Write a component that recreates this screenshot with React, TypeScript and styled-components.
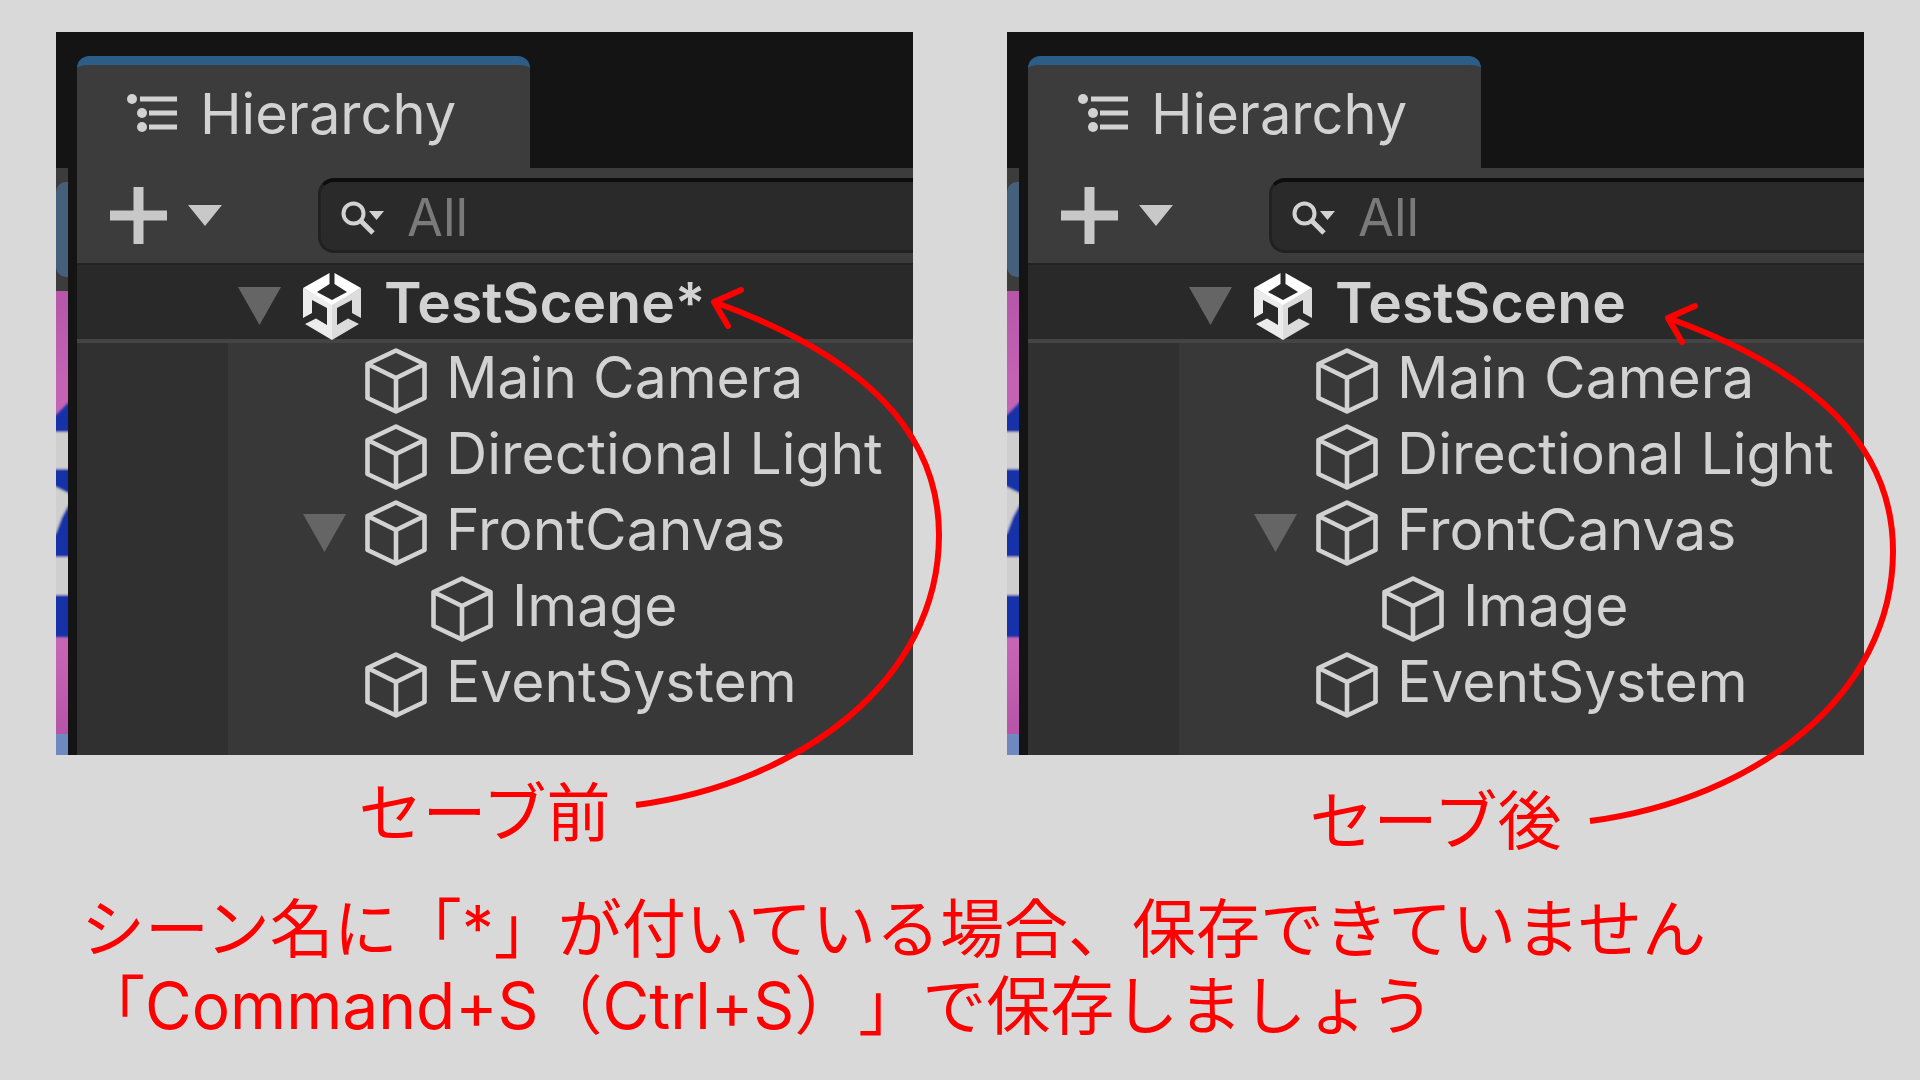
import React from "react";
import styled, { createGlobalStyle } from "styled-components";

const GlobalStyle = createGlobalStyle`
  * { box-sizing: border-box; }
  body { margin: 0; background: #d9d9d9; }
`;

const Page = styled.main`
  min-height: 100vh;
  padding: 32px 56px 0;
  background: #d9d9d9;
  color: #ff0000;
  font-family: Inter, "Noto Sans CJK JP", sans-serif;
`;

const Comparison = styled.div`
  display: grid;
  grid-template-columns: 1fr 1fr;
  column-gap: 94px;
`;

const Figure = styled.figure`
  position: relative;
  margin: 0;
  min-width: 0;
`;

const Caption = styled.figcaption<{ $drop: number }>`
  padding-top: ${(p) => p.$drop}px;
  font-size: 64px;
  line-height: 77px;
  text-align: center;
`;

const Arrow = styled.svg<{ $top: number; $overhang: number }>`
  position: absolute;
  top: ${(p) => p.$top}px;
  right: ${(p) => -p.$overhang}px;
  width: 320px;
  height: 540px;
  overflow: visible;
  pointer-events: none;
`;

const Editor = styled.section`
  display: flex;
  overflow: hidden;
  background: #141414;
  color: #d2d2d2;
`;

const GameStrip = styled.div`
  flex: none;
  display: flex;
  flex-direction: column;
  width: 12px;
  padding-top: 136px;
`;

const StripToolbar = styled.div`
  padding: 14px 0;
  background: #3c3c3c;
`;

const StripTab = styled.div`
  height: 95px;
  border-radius: 10px 0 0 10px;
  background: #46607c;
`;

const StripView = styled.svg`
  display: block;
  width: 12px;
  height: 464px;
`;

const Panel = styled.div`
  flex: 1;
  min-width: 0;
  margin-left: 9px;
  padding-top: 24px;
`;

const Tab = styled.h2`
  display: flex;
  align-items: center;
  gap: 23px;
  width: 453px;
  height: 112px;
  margin: 0;
  padding: 0 0 5px 50px;
  border-top: 9px solid #2c5d87;
  border-radius: 12px 12px 0 0;
  background: #3c3c3c;
  font-size: 56px;
  font-weight: 400;
  line-height: 68px;
`;

const Toolbar = styled.div`
  display: flex;
  align-items: center;
  height: 95px;
  padding-left: 33px;
  background: #3c3c3c;
`;

const AddButton = styled.button`
  display: flex;
  align-items: center;
  gap: 21px;
  margin-right: 96px;
  padding: 0;
  border: 0;
  background: none;
  color: #c8c8c8;
`;

const SearchField = styled.label`
  flex: 1;
  display: flex;
  align-items: center;
  gap: 22px;
  min-width: 0;
  height: 75px;
  padding: 3px 0 0 20px;
  border: solid #212121;
  border-width: 4px 0 3px 3px;
  border-top-color: #0d0d0d;
  border-radius: 16px 0 0 16px;
  background: #2a2a2a;
`;

const SearchInput = styled.input`
  flex: 1;
  min-width: 0;
  padding: 0;
  border: 0;
  outline: 0;
  background: none;
  color: #d2d2d2;
  font: 400 52px/64px Inter, sans-serif;
  &::placeholder { color: #7a7a7a; opacity: 1; }
`;

const SceneRow = styled.div`
  display: flex;
  align-items: center;
  height: 80px;
  padding: 8px 0 0 161px;
  border-top: 2px solid #232323;
  border-bottom: 4px solid #444444;
  background: #292929;
`;

const SceneLogo = styled.svg`
  flex: none;
  width: 58px;
  height: 67px;
  margin: 0 23px 0 22px;
`;

const Tree = styled.ul`
  margin: 0;
  padding: 0 0 32px 75px;
  border-left: 151px solid #303030;
  background: #383838;
  list-style: none;
`;

const TreeItem = styled.li<{ $depth: number }>`
  display: flex;
  align-items: center;
  gap: 19px;
  height: 76px;
  padding-left: ${(p) => p.$depth * 66}px;
`;

const Name = styled.span<{ $bold?: boolean }>`
  padding-bottom: 6px;
  font-size: 57px;
  font-weight: ${(p) => (p.$bold ? 600 : 400)};
  line-height: 68px;
  white-space: nowrap;
`;

const Toggle = styled.span`
  flex: none;
  display: flex;
  width: 43px;
`;

const Glyph = styled.svg`
  flex: none;
  display: block;
`;

const Note = styled.p`
  margin: 0;
  padding: 31px 0 0 25px;
  font-size: 64px;
  line-height: 77px;
  text-spacing-trim: space-all;
`;

const Foldout = () => (
  <Glyph width="43" height="38" viewBox="0 0 43 38" aria-hidden="true">
    <path d="M0 0H43L21.5 38Z" fill="#656565" />
  </Glyph>
);

const Cube = () => (
  <Glyph width="62" height="66" viewBox="0 0 62 66" fill="none" stroke="#d2d2d2" strokeWidth="4.6" strokeLinejoin="round" aria-hidden="true">
    <path d="M31 2.500L59.500 16V50L31 63.500L2.500 50V16ZM2.500 16L31 30L59.500 16M31 30V63" />
  </Glyph>
);

const HierarchyIcon = () => (
  <Glyph width="50" height="40" viewBox="0 0 50 40" fill="#d2d2d2" aria-hidden="true">
    <circle cx="5" cy="5" r="5" />
    <circle cx="15" cy="19" r="5" />
    <circle cx="15" cy="33" r="5" />
    <path d="M13 2.500H50V7.500H13ZM22 16.500H50V21.500H22ZM22 30.500H50V35.500H22Z" />
  </Glyph>
);

const SearchIcon = () => (
  <Glyph width="44" height="34" viewBox="0 0 44 34" aria-hidden="true">
    <circle cx="12.500" cy="12.500" r="10" fill="none" stroke="#d2d2d2" strokeWidth="4" />
    <path d="M20 20L32 32" stroke="#d2d2d2" strokeWidth="5" />
    <path d="M28 10H43L35.500 19Z" fill="#d2d2d2" />
  </Glyph>
);

const UnityLogo = () => (
  <SceneLogo viewBox="0 0 58 67" aria-hidden="true">
    <path d="M0 15L29 31V67L2 51L13 45.500L24 52V35L9 27V40L0 45Z" fill="#ececec" />
    <path d="M58 15L29 31V67L56 51L45 45.500L34 52V35L49 27V40L58 45Z" fill="#dcdcdc" />
    <path d="M26.500 0V11L14 19L29 27L44 19L31.500 11V0L58 15L29 32L0 15Z" fill="#ffffff" />
  </SceneLogo>
);

// Edge of the Game view that shows beside the panel.
const GameView = ({ id }: { id: string }) => (
  <StripView viewBox="0 0 12 464" aria-hidden="true">
    <defs>
      <linearGradient id={`${id}-pink`} x1="0" y1="0" x2="0" y2="1">
        <stop offset="0" stopColor="#b556aa" />
        <stop offset="0.2" stopColor="#c463b4" />
        <stop offset="0.8" stopColor="#c765b5" />
        <stop offset="1" stopColor="#b654a8" />
      </linearGradient>
      <filter id={`${id}-soft`} x="-50%" y="-5%" width="200%" height="110%">
        <feGaussianBlur stdDeviation="1.2" />
      </filter>
    </defs>
    <rect width="12" height="443" fill={`url(#${id}-pink)`} />
    <g filter={`url(#${id}-soft)`}>
      <path d="M-8 129L0 124L12 112L20 106V346H-8Z" fill="#1232a8" />
      <path d="M-8 141H20V178H-8ZM-8 192L0 196L12 202L20 205L12 215L6 226L0 242L-8 250ZM-8 266H20V304H-8Z" fill="#cfcfcf" />
    </g>
    <rect y="443" width="12" height="21" fill="#6f88c0" />
  </StripView>
);

type Entry = { name: string; depth: number; open?: boolean };

const entries: Entry[] = [
  { name: "Main Camera", depth: 0 },
  { name: "Directional Light", depth: 0 },
  { name: "FrontCanvas", depth: 0, open: true },
  { name: "Image", depth: 1 },
  { name: "EventSystem", depth: 0 },
];

type HierarchyProps = {
  id: string;
  scene: string;
  caption: string;
  captionDrop: number;
  arrowTop: number;
  arrowOverhang: number;
};

const Hierarchy = ({ id, scene, caption, captionDrop, arrowTop, arrowOverhang }: HierarchyProps) => (
  <Figure>
    <Editor>
      <GameStrip>
        <StripToolbar>
          <StripTab />
        </StripToolbar>
        <GameView id={id} />
      </GameStrip>
      <Panel>
        <Tab>
          <HierarchyIcon />
          Hierarchy
        </Tab>
        <Toolbar>
          <AddButton type="button" aria-label="Create">
            <Glyph width="57" height="57" viewBox="0 0 57 57" aria-hidden="true">
              <path d="M23.500 0H33.500V23.500H57V33.500H33.500V57H23.500V33.500H0V23.500H23.500Z" fill="currentColor" />
            </Glyph>
            <Glyph width="34" height="21" viewBox="0 0 34 21" aria-hidden="true">
              <path d="M0 0H34L17 21Z" fill="currentColor" />
            </Glyph>
          </AddButton>
          <SearchField>
            <SearchIcon />
            <SearchInput type="text" placeholder="All" aria-label="Search" />
          </SearchField>
        </Toolbar>
        <SceneRow>
          <Foldout />
          <UnityLogo />
          <Name $bold>{scene}</Name>
        </SceneRow>
        <Tree>
          {entries.map((e) => (
            <TreeItem key={e.name} $depth={e.depth}>
              <Toggle>{e.open && <Foldout />}</Toggle>
              <Cube />
              <Name>{e.name}</Name>
            </TreeItem>
          ))}
        </Tree>
      </Panel>
    </Editor>
    <Caption $drop={captionDrop}>{caption}</Caption>
    <Arrow $top={arrowTop} $overhang={arrowOverhang} viewBox="0 0 320 540" fill="none" stroke="#ff0000" strokeWidth="6" aria-hidden="true">
      <path d="M2 523C167 501 305 398 305 253C305 148 227 73 80 20" />
      <path d="M107 8L80 20L94 44" strokeLinecap="round" strokeLinejoin="round" />
    </Arrow>
  </Figure>
);

const App = () => (
  <>
    <GlobalStyle />
    <Page lang="ja">
      <Comparison>
        <Hierarchy id="before" scene="TestScene*" caption="セーブ前" captionDrop={19} arrowTop={250} arrowOverhang={41} />
        <Hierarchy id="after" scene="TestScene" caption="セーブ後" captionDrop={27} arrowTop={266} arrowOverhang={44} />
      </Comparison>
      <Note>
        シーン名に「*」が付いている場合、保存できていません
        <br />
        「Command+S（Ctrl+S）」で保存しましょう
      </Note>
    </Page>
  </>
);

export default App;
